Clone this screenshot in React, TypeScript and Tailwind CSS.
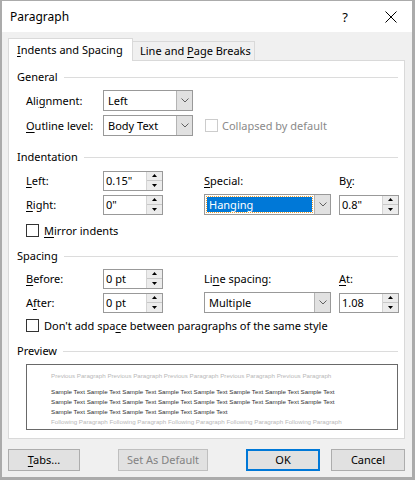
import type { ReactNode } from 'react';

const font = "font-['Noto_Sans','Liberation_Sans',sans-serif]";

function U({ children }: { children: ReactNode }) {
  return <span className="underline underline-offset-2">{children}</span>;
}

function Chevron() {
  return (
    <svg width="8" height="5" viewBox="0 0 8 5" className="block">
      <polyline points="0.5,0.5 4,4 7.5,0.5" fill="none" stroke="#606060" strokeWidth="1" />
    </svg>
  );
}

function Select({ value, w, active }: { value: string; w: string; active?: boolean }) {
  return (
    <div className={`flex h-[21px] ${w} border border-[#999999] bg-white`}>
      <div className="flex flex-1 items-center p-[2px]">
        {active ? (
          <div className="flex h-full w-full items-center bg-[#0078d7] pl-[2px] text-white outline-1 outline-dotted outline-[#f0a030]">
            {value}
          </div>
        ) : (
          <span className="pl-[2px]">{value}</span>
        )}
      </div>
      <div className="flex w-[16px] items-center justify-center border-l border-[#b4b4b4] bg-[#e1e1e1]">
        <Chevron />
      </div>
    </div>
  );
}

function Spin({ value }: { value: string }) {
  return (
    <div className="flex h-[20px] w-[60px] border border-[#999999] bg-white">
      <div className="flex flex-1 items-center pl-[2px]">{value}</div>
      <div className="flex w-[16px] flex-col border-l border-[#d4d4d4] bg-[#ececec]">
        <div className="flex flex-1 items-center justify-center border-b border-[#c8c8c8]">
          <svg width="5" height="3" viewBox="0 0 5 3" className="block">
            <polygon points="0,3 5,3 2.5,0" fill="#000" />
          </svg>
        </div>
        <div className="flex flex-1 items-center justify-center">
          <svg width="5" height="3" viewBox="0 0 5 3" className="block">
            <polygon points="0,0 5,0 2.5,3" fill="#000" />
          </svg>
        </div>
      </div>
    </div>
  );
}

function Check({ disabled }: { disabled?: boolean }) {
  return (
    <div
      className={`h-[13px] w-[13px] shrink-0 border bg-white ${disabled ? 'border-[#cccccc]' : 'border-[#333333]'}`}
    />
  );
}

function Section({ title }: { title: string }) {
  return (
    <div className="flex h-[14px] items-center gap-[6px]">
      <span>{title}</span>
      <div className="h-px flex-1 bg-[#dcdcdc]" />
    </div>
  );
}

function Btn({ children, w, kind }: { children: ReactNode; w: string; kind?: 'default' | 'disabled' }) {
  const cls =
    kind === 'default'
      ? 'border-2 border-[#0078d7]'
      : kind === 'disabled'
        ? 'border border-[#bfbfbf] text-[#838383]'
        : 'border border-[#adadad]';
  return (
    <div className={`flex h-[22px] ${w} items-center justify-center bg-[#e1e1e1] ${cls}`}>{children}</div>
  );
}

const prev = 'Previous Paragraph '.repeat(5).trim();
const sample = 'Sample Text '.repeat(8).trim();
const sample3 = 'Sample Text '.repeat(5).trim();
const follow = 'Following Paragraph '.repeat(5).trim();

export default function App() {
  return (
    <div className={`h-[480px] w-[415px] bg-[#ababab] pb-[3px] pl-[2px] pr-[3px] pt-[1px] text-[11px] leading-[14px] text-black whitespace-nowrap ${font}`}>
      <div className="flex h-full flex-col bg-[#f0f0f0]">
        {/* title bar */}
        <div className="flex h-[31px] items-center bg-white pl-[8px]">
          <span className="flex-1 text-[12px]">Paragraph</span>
          <span className="w-[14px] text-center text-[13px]">?</span>
          <svg width="12" height="12" viewBox="0 0 12 12" className="ml-[33px] mr-[15px]">
            <path d="M0.5 0.5 L11.5 11.5 M11.5 0.5 L0.5 11.5" stroke="#000" strokeWidth="1" />
          </svg>
        </div>

        <div className="flex flex-1 flex-col pl-[6px] pr-[7px] pt-[6px]">
          {/* tabs */}
          <div className="flex items-end">
            <div className="relative z-10 -mb-px flex h-[23px] w-[125px] items-center border border-b-0 border-[#d9d9d9] bg-white pl-[8px]">
              <span><U>I</U>ndents and Spacing</span>
            </div>
            <div className="flex h-[19px] w-[122px] items-center border border-b-0 border-l-0 border-[#d9d9d9] bg-[#f0f0f0] pl-[7px]">
              <span>Line and <U>P</U>age Breaks</span>
            </div>
          </div>

          {/* panel */}
          <div className="flex h-[379px] flex-col border border-[#d9d9d9] bg-white pl-[8px] pr-[6px] pt-[9px]">
            <Section title="General" />
            <div className="mt-[6px] flex flex-col gap-[4px] pl-[9px]">
              <div className="flex items-center">
                <span className="w-[77px]">Ali<U>g</U>nment:</span>
                <Select value="Left" w="w-[90px]" />
              </div>
              <div className="flex items-center">
                <span className="w-[77px]"><U>O</U>utline level:</span>
                <Select value="Body Text" w="w-[90px]" />
                <div className="ml-[12px] flex items-center gap-[4px] text-[#8a8a8a]">
                  <Check disabled />
                  <span>Collapsed by default</span>
                </div>
              </div>
            </div>

            <div className="mt-[14px]">
              <Section title="Indentation" />
            </div>
            <div className="mt-[6px] grid grid-cols-[77px_101px_135px_59px] grid-rows-[21px_21px] items-center gap-y-[3px] pl-[9px]">
              <span><U>L</U>eft:</span>
              <Spin value={'0.15"'} />
              <span><U>S</U>pecial:</span>
              <span>B<U>y</U>:</span>
              <span><U>R</U>ight:</span>
              <Spin value={'0"'} />
              <Select value="Hanging" w="w-[127px]" active />
              <Spin value={'0.8"'} />
            </div>
            <div className="mt-[9px] flex h-[13px] items-center gap-[5px] pl-[9px]">
              <Check />
              <span><U>M</U>irror indents</span>
            </div>

            <div className="mt-[12px]">
              <Section title="Spacing" />
            </div>
            <div className="mt-[5px] grid grid-cols-[77px_101px_135px_59px] grid-rows-[21px_21px] items-center gap-y-[3px] pl-[9px]">
              <span><U>B</U>efore:</span>
              <Spin value="0 pt" />
              <span>Li<U>n</U>e spacing:</span>
              <span><U>A</U>t:</span>
              <span>A<U>f</U>ter:</span>
              <Spin value="0 pt" />
              <Select value="Multiple" w="w-[127px]" />
              <Spin value="1.08" />
            </div>
            <div className="mt-[6px] flex h-[13px] items-center gap-[5px] pl-[9px]">
              <Check />
              <span>Don't add spa<U>c</U>e between paragraphs of the same style</span>
            </div>

            <div className="mt-[12px]">
              <Section title="Preview" />
            </div>
            <div className="ml-[9px] mt-[6px] h-[66px] w-[372px] overflow-hidden border border-[#696969] pl-[24px] pt-[6px] text-[6.2px] leading-[10px] font-['Liberation_Sans',sans-serif]">
              <div className="text-[#b8b8b8]">{prev}</div>
              <div className="mt-[6px] text-[#303030]">{sample}</div>
              <div className="text-[#303030]">{sample}</div>
              <div className="text-[#303030]">{sample3}</div>
              <div className="text-[#b8b8b8]">{follow}</div>
            </div>
          </div>

          {/* buttons */}
          <div className="mt-[10px] flex items-center">
            <Btn w="w-[75px]"><span><U>T</U>abs...</span></Btn>
            <div className="ml-[38px]">
              <Btn w="w-[90px]" kind="disabled">Set As Default</Btn>
            </div>
            <div className="ml-[38px]">
              <Btn w="w-[74px]" kind="default">OK</Btn>
            </div>
            <div className="ml-[11px]">
              <Btn w="w-[74px]">Cancel</Btn>
            </div>
          </div>
        </div>
      </div>
    </div>
  );
}
